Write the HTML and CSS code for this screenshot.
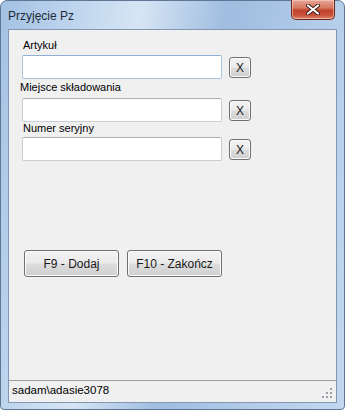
FILE: index.html
```html
<!DOCTYPE html>
<html lang="pl">
<head>
  <meta charset="UTF-8">
  <meta name="viewport" content="width=device-width, initial-scale=1.0">
  <title>Przyjęcie Pz</title>
  <link rel="stylesheet" href="styles.css">
</head>
<body>
  <div class="window">
    <div class="titlebar">
      <span class="title">Przyjęcie Pz</span>
      <button class="close-btn" type="button">
        <svg width="14" height="11" viewBox="0 0 14 11">
          <path d="M2 1.5 L12 9.5 M12 1.5 L2 9.5" stroke="#3a1a14" stroke-width="4" stroke-linecap="round"/>
          <path d="M2 1.5 L12 9.5 M12 1.5 L2 9.5" stroke="#fff" stroke-width="2.2" stroke-linecap="round"/>
        </svg>
      </button>
    </div>

    <div class="client">
      <div class="form">
        <label class="field-label label-artykul" for="artykul">Artykuł</label>
        <div class="field-row row-artykul">
          <input type="text" id="artykul" class="field-input focused">
          <button class="clear-btn" type="button">X</button>
        </div>

        <label class="field-label label-miejsce" for="miejsce">Miejsce składowania</label>
        <div class="field-row row-miejsce">
          <input type="text" id="miejsce" class="field-input">
          <button class="clear-btn" type="button">X</button>
        </div>

        <label class="field-label label-numer" for="numer">Numer seryjny</label>
        <div class="field-row row-numer">
          <input type="text" id="numer" class="field-input">
          <button class="clear-btn" type="button">X</button>
        </div>

        <div class="actions">
          <button class="action-btn" type="button">F9 - Dodaj</button>
          <button class="action-btn" type="button">F10 - Zakończ</button>
        </div>
      </div>

      <div class="statusbar">
        <span class="status-text">sadam\adasie3078</span>
        <svg class="grip" width="11" height="11" viewBox="0 0 11 11">
          <rect x="8" y="0" width="2" height="2" fill="#9aa0a8"/>
          <rect x="4" y="4" width="2" height="2" fill="#9aa0a8"/>
          <rect x="8" y="4" width="2" height="2" fill="#9aa0a8"/>
          <rect x="0" y="8" width="2" height="2" fill="#9aa0a8"/>
          <rect x="4" y="8" width="2" height="2" fill="#9aa0a8"/>
          <rect x="8" y="8" width="2" height="2" fill="#9aa0a8"/>
        </svg>
      </div>
    </div>
  </div>
</body>
</html>
```

FILE: styles.css
```css
* {
  box-sizing: border-box;
}
body {
  margin: 0;
  padding: 0;
  background-color: #ffffff;
  font-family: "Liberation Sans", Arial, sans-serif;
}
.window {
  width: 345px;
  height: 410px;
  border: 1px solid #5f7794;
  border-radius: 7px 7px 4px 4px;
  background: linear-gradient(100deg, #a3c1e3 0%, #c4d9ef 22%, #d6e5f4 34%, #9fbde0 55%, #b0cae8 75%, #c2d8ef 100%);
  display: flex;
  flex-direction: column;
}
.titlebar {
  height: 28px;
  display: flex;
  justify-content: space-between;
  align-items: flex-start;
  padding-left: 7px;
}
.title {
  font-size: 12px;
  line-height: 14px;
  margin-top: 8px;
  color: #1e2a38;
}
.close-btn {
  width: 44px;
  height: 20px;
  margin-top: -1px;
  margin-right: 9px;
  padding: 0;
  border: 1px solid #6d2a20;
  border-top: none;
  border-radius: 0 0 5px 5px;
  background: linear-gradient(#e7a596 0%, #d77a66 40%, #c2432b 55%, #c8503a 80%, #df8c70 100%);
  box-shadow: inset 0 0 0 1px rgba(255, 220, 210, 0.5);
  display: flex;
  align-items: center;
  justify-content: center;
}
.client {
  margin: 0 7px 0 7px;
  height: 374px;
  border: 1px solid #8297b1;
  background-color: #f0f0f0;
  display: flex;
  flex-direction: column;
}
.form {
  flex: 1;
}
.field-label {
  display: block;
  font-size: 11px;
  line-height: 13px;
  color: #000;
}
.label-artykul {
  margin: 9px 0 0 14px;
}
.label-miejsce {
  margin: 2px 0 0 11px;
}
.label-numer {
  margin: 0 0 0 14px;
}
.field-row {
  display: flex;
  align-items: center;
  gap: 7px;
  margin-left: 13px;
}
.row-artykul {
  margin-top: 3px;
}
.row-miejsce {
  margin-top: 4px;
}
.row-numer {
  margin-top: 2px;
}
.field-input {
  width: 200px;
  height: 24px;
  border: 1px solid #c9ced6;
  border-top-color: #abadb3;
  border-radius: 2px;
  background: #fff;
  font-family: inherit;
  font-size: 11px;
  outline: none;
}
.field-input.focused {
  border-color: #a9c3dd;
  border-top-color: #8fb0d2;
}
.clear-btn {
  width: 22px;
  height: 21px;
  margin-top: 1px;
  padding: 0;
  border: 1px solid #707070;
  border-radius: 3px;
  background: linear-gradient(#f2f2f2 0%, #ebebeb 48%, #dddddd 52%, #cfcfcf 100%);
  box-shadow: inset 0 0 0 1px #fcfcfc;
  font-family: inherit;
  font-size: 12px;
  color: #1a1a1a;
}
.actions {
  display: flex;
  gap: 8px;
  margin: 89px 0 0 15px;
}
.action-btn {
  width: 95px;
  height: 27px;
  padding: 0;
  border: 1px solid #707070;
  border-radius: 3px;
  background: linear-gradient(#f2f2f2 0%, #ebebeb 48%, #dddddd 52%, #cfcfcf 100%);
  box-shadow: inset 0 0 0 1px #fcfcfc;
  font-family: inherit;
  font-size: 12px;
  color: #1a1a1a;
}
.statusbar {
  height: 22px;
  border-top: 1px solid #a0a0a0;
  background-color: #f0f0f0;
  display: flex;
  justify-content: space-between;
  align-items: flex-end;
  padding: 0 3px 3px 3px;
}
.status-text {
  font-size: 11.5px;
  line-height: 15px;
  margin-bottom: 1px;
  color: #000;
}
.grip {
  display: block;
}
```
